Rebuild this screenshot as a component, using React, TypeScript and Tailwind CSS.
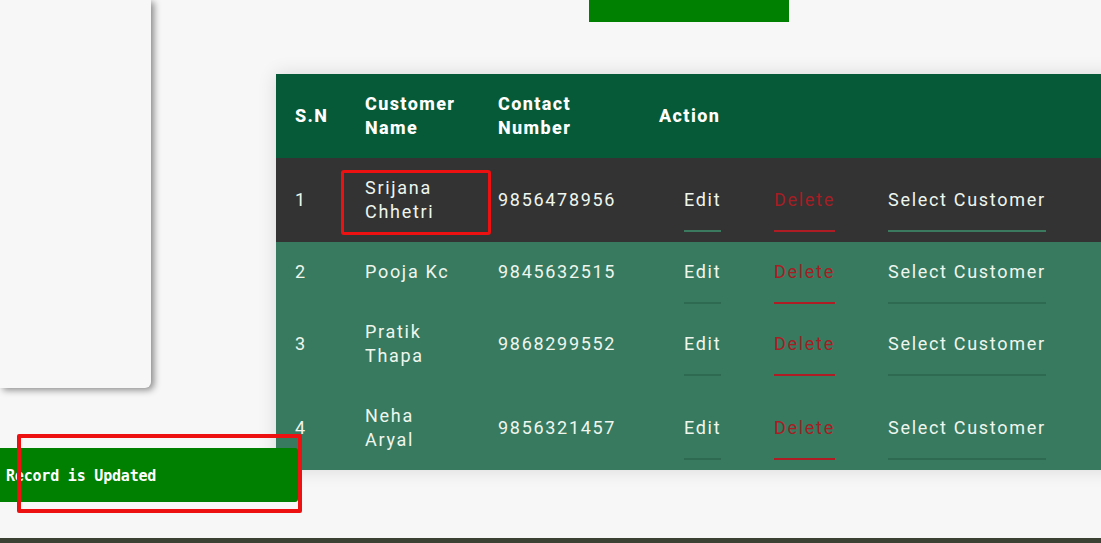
import React from "react";

type Row = { sn: number; name: string[]; phone: string; tall: boolean; bg: string; line: string };

const rows: Row[] = [
  { sn: 1, name: ["Srijana", "Chhetri"], phone: "9856478956", tall: true, bg: "bg-[#333333]", line: "border-[#3b7a5f]" },
  { sn: 2, name: ["Pooja Kc"], phone: "9845632515", tall: false, bg: "bg-[#387a5f]", line: "border-[#2e6a51]" },
  { sn: 3, name: ["Pratik", "Thapa"], phone: "9868299552", tall: false, bg: "bg-[#387a5f]", line: "border-[#2e6a51]" },
  { sn: 4, name: ["Neha", "Aryal"], phone: "9856321457", tall: true, bg: "bg-[#387a5f]", line: "border-[#2e6a51]" },
];

const ActionLink = ({ label, className }: { label: string; className: string }) => {
  return <span className={`pt-5 pb-[18px] border-b-2 ${className}`}>{label}</span>;
};

const CustomerTable = () => {
  return (
    <div className="w-[900px] shadow-[0_0_18px_rgba(0,0,0,0.12)] font-['Roboto',sans-serif]">
      <div className="flex items-center h-[84px] bg-[#065a38] text-white text-[18px] leading-6 font-extrabold tracking-[1.4px]">
        <div className="w-[89px] pl-[19px]">S.N</div>
        <div className="w-[133px]">
          Customer
          <br />
          Name
        </div>
        <div className="w-[161px]">
          Contact
          <br />
          Number
        </div>
        <div>Action</div>
      </div>
      {rows.map((r) => (
        <div
          key={r.sn}
          className={`flex items-center ${r.tall ? "h-[84px]" : "h-[72px] pb-3"} ${r.bg} text-[#eef6ee] text-[18px] leading-6 tracking-[1.7px]`}
        >
          <div className="w-[89px] pl-[19px]">{r.sn}</div>
          <div className="w-[133px]">
            {r.name.map((n) => (
              <div key={n}>{n}</div>
            ))}
          </div>
          <div className="w-[161px]">{r.phone}</div>
          <div className="w-[90px] pl-[25px] flex">
            <ActionLink label="Edit" className={r.line} />
          </div>
          <div className="w-[114px] pl-[25px] flex">
            <ActionLink label="Delete" className="text-[#a61d24] border-[#b01c24]" />
          </div>
          <div className="pl-[25px] flex">
            <ActionLink label="Select Customer" className={r.line} />
          </div>
        </div>
      ))}
    </div>
  );
};

export default function App() {
  return (
    <div className="relative w-[1101px] h-[543px] overflow-hidden bg-[#f7f7f7] flex flex-col">
      <div className="flex flex-1">
        <div className="w-[151px] h-[388px] shrink-0 bg-[#f7f7f7] rounded-br-[6px] shadow-[3px_2px_7px_rgba(0,0,0,0.45)]" />
        <div className="flex flex-col pl-[125px]">
          <div className="ml-[313px] w-[200px] h-[22px] bg-[#008000]" />
          <div className="mt-[52px]">
            <CustomerTable />
          </div>
        </div>
      </div>
      <div className="h-[5px] bg-[#3b4133]" />

      <div className="absolute left-0 top-[448px] w-[298px] h-[54px] bg-[#008000] rounded-r-[3px] flex items-center pl-[6px] pt-[3px]">
        <span className="text-white font-bold text-[15px] font-['DejaVu_Sans_Mono',monospace] tracking-[-0.2px]">
          Record is Updated
        </span>
      </div>

      <div className="absolute left-[341px] top-[170px] w-[150px] h-[65px] border-[3px] border-[#ee1111] rounded-[3px]" />
      <div className="absolute left-[17px] top-[434px] w-[285px] h-[79px] border-[4px] border-[#ee1111] rounded-[2px]" />
    </div>
  );
}
